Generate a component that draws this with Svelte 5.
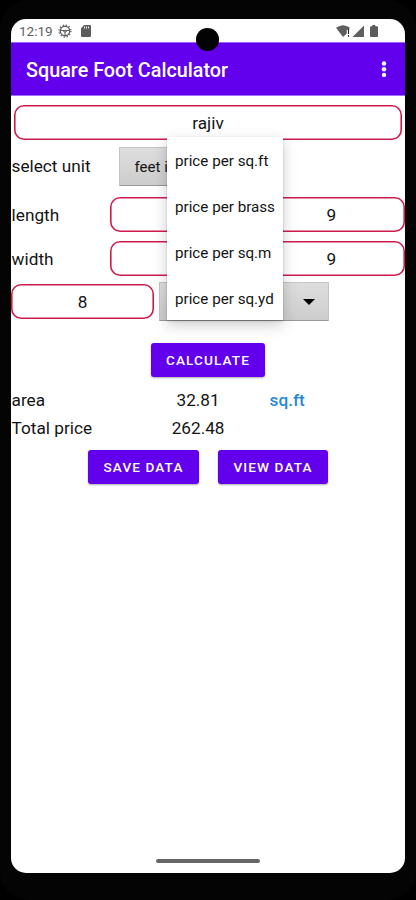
<script>
  let name = "rajiv";
  let unit = "feet i";
  let length = ["", "9"];
  let width = ["", "9"];
  let rate = "8";
  let area = "32.81";
  let total = "262.48";
  let menu = true;

  const options = [
    "price per sq.ft",
    "price per brass",
    "price per sq.m",
    "price per sq.yd",
  ];
  let selected = "";

  function select(option) {
    selected = option;
    menu = false;
  }
</script>

<div class="device">
  <div class="screen">
    <div class="status">
      <span class="time">12:19</span>
      <svg class="debug" width="14" height="14" viewBox="0 0 14 14">
        <circle cx="7" cy="7" r="4.7" fill="none" stroke="#5f5f5f" stroke-width="1.4" />
        <circle cx="7" cy="7" r="6" fill="none" stroke="#5f5f5f" stroke-width="1.3" stroke-dasharray="1.25 1.89" />
        <path d="M2.5 6.4h9M7 6.5v5M4.5 6.5l2.5 1.8 2.5-1.8" fill="none" stroke="#5f5f5f" stroke-width="1" />
      </svg>
      <svg class="card" width="10" height="12" viewBox="0 0 10 12">
        <path d="M3.2 0H9Q10 0 10 1V11Q10 12 9 12H1Q0 12 0 11V3.2Z" fill="#5c5c5c" />
        <path d="M3.5 1.5v2M5.5 1.5v2M7.5 1.5v2" stroke="#fff" stroke-width="0.9" />
      </svg>
      <svg class="signals" width="43" height="13" viewBox="0 0 43 13">
        <path d="M0 2.8Q7 -2.2 14 2.8L12.4 4.8H10.8V8.4L7 12Z" fill="#5f5f5f" />
        <path d="M12.5 3.7v5.2M12.5 10v1.7" stroke="#222" stroke-width="1.1" />
        <path d="M28 .5V12H16.5Z" fill="#5f5f5f" />
        <path d="M36.3 0h3v1.3H41q1 0 1 1V11q0 1-1 1h-6q-1 0-1-1V2.3q0-1 1-1h1.3Z" fill="#5c5c5c" />
      </svg>
    </div>

    <header>
      <h1>Square Foot Calculator</h1>
      <svg width="6" height="18" viewBox="0 0 6 18" fill="#fff">
        <circle cx="3" cy="2.5" r="2.2" />
        <circle cx="3" cy="8.2" r="2.2" />
        <circle cx="3" cy="13.9" r="2.2" />
      </svg>
    </header>

    <main>
      <div class="field name">{name}</div>

      <div class="row unit">
        <span class="label">select unit</span>
        <div class="spinner">{unit}</div>
      </div>

      <div class="row size">
        <span class="label">length</span>
        <div class="field">{length[0]}</div>
        <div class="field">{length[1]}</div>
      </div>

      <div class="row size">
        <span class="label">width</span>
        <div class="field">{width[0]}</div>
        <div class="field">{width[1]}</div>
      </div>

      <div class="row rate">
        <div class="field">{rate}</div>
        <div class="spinner">
          <span>{selected}</span>
          <svg width="12" height="6" viewBox="0 0 12 6"><path d="M0 0h12L6 6Z" /></svg>
        </div>
      </div>

      <button class="calculate">CALCULATE</button>

      <div class="result">
        <span>area</span>
        <span class="value">{area}</span>
        <span class="sqft">sq.ft</span>
      </div>
      <div class="result">
        <span>Total price</span>
        <span class="value">{total}</span>
      </div>

      <div class="actions">
        <button class="save">SAVE DATA</button>
        <button class="view">VIEW DATA</button>
      </div>
    </main>

    <div class="home"></div>

    {#if menu}
      <div class="menu">
        {#each options as option}
          <button class="option" on:click={() => select(option)}>{option}</button>
        {/each}
      </div>
    {/if}
  </div>
  <div class="camera"></div>
</div>

<style>
  :global(body) {
    background: #000;
  }

  .device {
    position: relative;
    box-sizing: border-box;
    width: 416px;
    height: 900px;
    padding: 19px 11px 27px;
    border-radius: 28px;
    background: #040404;
    color: #141414;
    font-family: Roboto, sans-serif;
    font-size: 17.2px;
  }

  .screen {
    position: relative;
    display: flex;
    flex-direction: column;
    height: 854px;
    border-radius: 15px;
    overflow: hidden;
    background: white;
  }

  .camera {
    position: absolute;
    top: 27.5px;
    left: 195.5px;
    width: 23.5px;
    height: 23px;
    border-radius: 50%;
    background: #030303;
  }

  .status {
    display: flex;
    align-items: center;
    flex: none;
    box-sizing: border-box;
    height: 23px;
    padding: 1px 26px 0 8px;
    color: #5f5f5f;
  }
  .time {
    width: 39px;
    font-size: 13.5px;
  }
  .card {
    margin-left: 9px;
  }
  .signals {
    margin-left: auto;
  }

  header {
    display: flex;
    align-items: center;
    justify-content: space-between;
    flex: none;
    box-sizing: border-box;
    height: 54px;
    padding: 1px 18px 0 15px;
    border-top: 1px solid #9b65f5;
    border-bottom: 1px solid #a36ff8;
    background: #6200ee;
    color: white;
  }
  h1 {
    margin: 1px 0 0;
    font-size: 19.8px;
    font-weight: 500;
  }

  main {
    display: flex;
    flex-direction: column;
  }

  .field {
    display: flex;
    align-items: center;
    justify-content: center;
    box-sizing: border-box;
    height: 35px;
    border-radius: 10px;
    box-shadow: inset 0 0 0 1.6px #cf1b4b;
  }
  .name {
    margin: 9px 3px 0;
  }

  .row {
    display: flex;
    align-items: center;
  }
  .label {
    flex: none;
    box-sizing: border-box;
    padding-left: 0.6px;
  }
  .unit {
    height: 39px;
    margin: 7px 0 11px;
  }
  .unit .label {
    width: 108px;
    margin-top: -2px;
  }
  .size {
    height: 35px;
    margin-bottom: 9px;
  }
  .size .label {
    width: 99px;
  }
  .size .field {
    flex: 1;
  }
  .rate {
    gap: 5px;
    height: 39px;
    margin-top: -3px;
  }
  .rate .field {
    width: 143px;
  }

  .spinner {
    display: flex;
    align-items: center;
    justify-content: space-between;
    box-sizing: border-box;
    width: 170px;
    height: 39px;
    padding: 0 13px 0 15px;
    border: 1px solid #c4c4c4;
    border-bottom-color: #999;
    border-radius: 1px;
    background: linear-gradient(#dedede, #cdcdcd);
    font-size: 15.1px;
  }
  .unit .spinner {
    width: 120px;
    padding-left: 14.5px;
  }

  button {
    border: none;
    padding: 0;
    font-family: inherit;
    cursor: pointer;
  }
  .calculate,
  .actions button {
    height: 34px;
    border-radius: 3px;
    background: #6200ee;
    box-shadow: 0 1px 2px #0005;
    color: white;
    font-size: 13.6px;
    font-weight: 500;
    letter-spacing: 1.1px;
  }
  .calculate {
    align-self: center;
    width: 114px;
    margin: 22px 0 9px;
  }

  .result {
    display: grid;
    grid-template-columns: 115px 143px auto;
    align-items: center;
    height: 28px;
    padding-left: 0.6px;
  }
  .value {
    text-align: center;
  }
  .sqft {
    color: #2688db;
    font-weight: 500;
  }

  .actions {
    display: flex;
    justify-content: center;
    gap: 19px;
    margin-top: 8px;
  }
  .save {
    width: 111px;
  }
  .view {
    width: 110px;
  }

  .home {
    align-self: center;
    width: 104px;
    height: 4px;
    margin: auto 0 10px;
    border-radius: 2px;
    background: #666;
  }

  .menu {
    position: absolute;
    top: 118px;
    left: 156px;
    display: flex;
    flex-direction: column;
    width: 116px;
    height: 183px;
    background: white;
    box-shadow:
      0 5px 14px #0003,
      0 1px 2px #0003;
  }
  .option {
    flex: none;
    height: 46px;
    padding: 1px 0 0 8px;
    background: none;
    color: #141414;
    font-size: 15.2px;
    text-align: left;
    white-space: nowrap;
  }
</style>
